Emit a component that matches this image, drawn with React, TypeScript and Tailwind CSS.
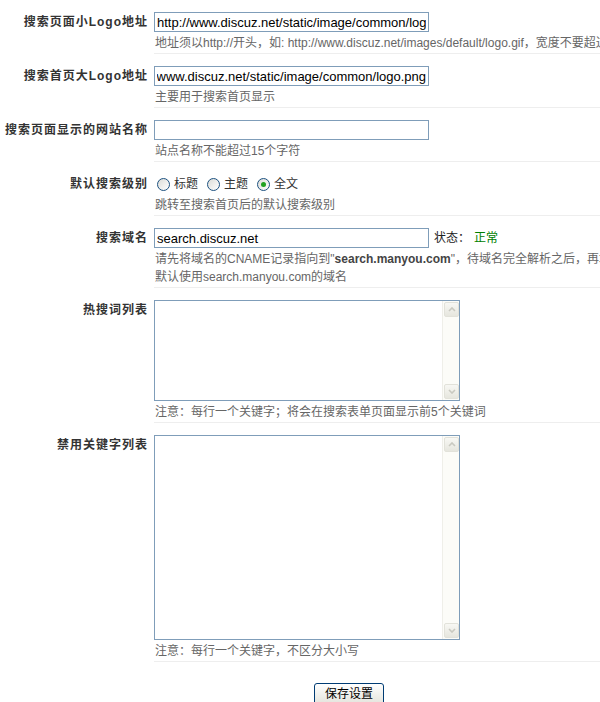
import React, { useEffect, useRef } from 'react';

const font = "font-['Liberation_Sans','Noto_Sans_CJK_SC',sans-serif]";

function Row({ label, children }: { label: string; children: React.ReactNode }) {
  return (
    <div className="flex">
      <div className="w-[154px] shrink-0 pr-[6px] pt-[12px] text-right text-[12px] leading-[20px] font-bold tracking-[1px] text-[#333]">
        {label}
      </div>
      <div className="flex-1 border-b border-[#eeeeee] pt-[12px] pb-[1px]">{children}</div>
    </div>
  );
}

function Desc({ children }: { children: React.ReactNode }) {
  return <div className="mt-[2px] whitespace-nowrap pl-[1px] text-[12px] leading-[18px] text-[#666]">{children}</div>;
}

const inputCls =
  "block h-[20px] w-[275px] border border-[#7f9db9] bg-white px-[2px] text-[13px] text-black outline-none " + font;

function Radio({ label, checked }: { label: string; checked?: boolean }) {
  return (
    <label className="mr-[9px] flex items-center text-[12px] text-[#333]">
      <span className="flex h-[13px] w-[13px] items-center justify-center rounded-full border border-[#1c5180] bg-gradient-to-br from-[#dcdcd7] to-white">
        {checked && <span className="h-[5px] w-[5px] rounded-full bg-[#21a121]" />}
      </span>
      <span className="ml-[4px]">{label}</span>
    </label>
  );
}

function ScrollBtn({ up }: { up?: boolean }) {
  return (
    <div className="flex h-[15px] w-[15px] items-center justify-center rounded-[2px] border border-[#e2e2da] bg-gradient-to-b from-[#f8f8f4] to-[#e6e6de]">
      <svg width="8" height="5" viewBox="0 0 8 5">
        <path d={up ? 'M1 4 L4 1 L7 4' : 'M1 1 L4 4 L7 1'} fill="none" stroke="#c9c9c0" strokeWidth="1.6" />
      </svg>
    </div>
  );
}

function Area({ h }: { h: string }) {
  return (
    <div className={"flex w-[306px] border border-[#7f9db9] bg-white " + h}>
      <textarea className="flex-1 resize-none overflow-hidden outline-none" />
      <div className="flex w-[17px] flex-col justify-between border-l border-[#efefe9] bg-[#fcfcf8] p-[1px]">
        <ScrollBtn up />
        <ScrollBtn />
      </div>
    </div>
  );
}

export default function App() {
  const bigLogo = useRef<HTMLInputElement>(null);

  useEffect(() => {
    if (bigLogo.current) bigLogo.current.scrollLeft = bigLogo.current.scrollWidth;
  }, []);

  return (
    <div className={"h-[702px] w-[600px] overflow-hidden bg-white " + font}>
      <div className="w-[698px]">
        <Row label="搜索页面小Logo地址">
          <input className={inputCls} defaultValue="http://www.discuz.net/static/image/common/logo.png" />
          <Desc>地址须以http://开头，如: http://www.discuz.net/images/default/logo.gif，宽度不要超过 200 像素</Desc>
        </Row>
        <Row label="搜索首页大Logo地址">
          <input ref={bigLogo} className={inputCls} defaultValue="http://www.discuz.net/static/image/common/logo.png" />
          <Desc>主要用于搜索首页显示</Desc>
        </Row>
        <Row label="搜索页面显示的网站名称">
          <input className={inputCls} defaultValue="" />
          <Desc>站点名称不能超过15个字符</Desc>
        </Row>
        <Row label="默认搜索级别">
          <div className="flex h-[20px] items-center pl-[3px]">
            <Radio label="标题" />
            <Radio label="主题" />
            <Radio label="全文" checked />
          </div>
          <Desc>跳转至搜索首页后的默认搜索级别</Desc>
        </Row>
        <Row label="搜索域名">
          <div className="flex items-center">
            <input className={inputCls} defaultValue="search.discuz.net" />
            <span className="ml-[5px] text-[12px] text-[#222]">状态：</span>
            <span className="ml-[4px] text-[12px] text-[#008000]">正常</span>
          </div>
          <Desc>
            请先将域名的CNAME记录指向到"<b className="text-[#444]">search.manyou.com</b>"，待域名完全解析之后，再填写此项，留空则
            <br />
            默认使用search.manyou.com的域名
          </Desc>
        </Row>
        <Row label="热搜词列表">
          <Area h="h-[101px]" />
          <Desc>注意：每行一个关键字；将会在搜索表单页面显示前5个关键词</Desc>
        </Row>
        <Row label="禁用关键字列表">
          <Area h="h-[205px]" />
          <Desc>注意：每行一个关键字，不区分大小写</Desc>
        </Row>
        <div className="flex justify-center pt-[21px]">
          <button className="h-[22px] w-[70px] rounded-[3px] border border-[#003c74] bg-gradient-to-b from-white to-[#e4e4dc] text-[12px] text-black">
            保存设置
          </button>
        </div>
      </div>
    </div>
  );
}
